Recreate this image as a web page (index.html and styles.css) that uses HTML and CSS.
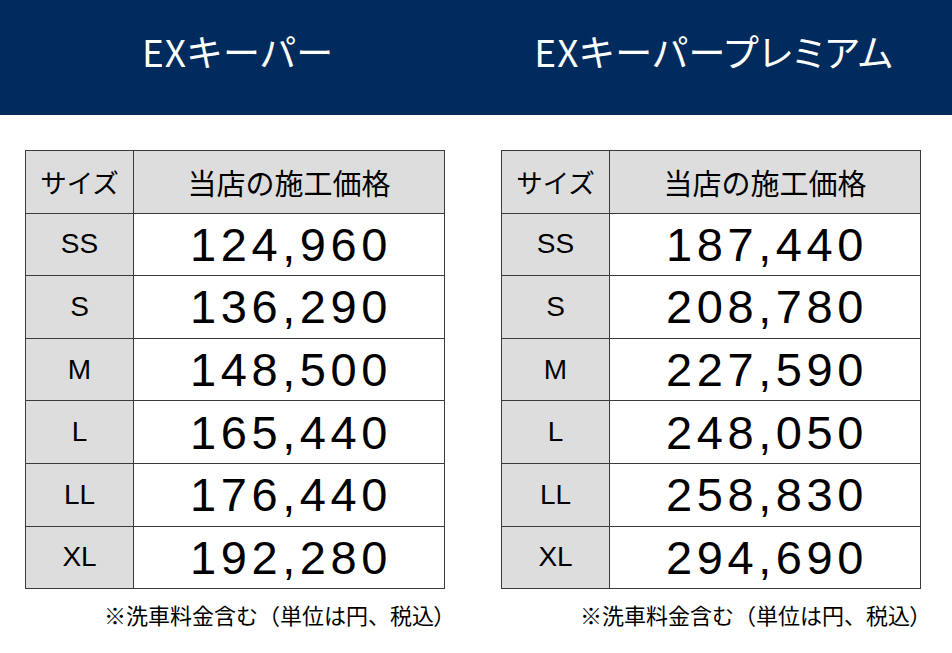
FILE: index.html
```html
<!DOCTYPE html>
<html lang="ja">
<head>
<meta charset="utf-8">
<link rel="stylesheet" href="styles.css">
</head>
<body>
<header class="banner">
  <div class="banner-col"><h1 class="title">EXキーパー</h1></div>
  <div class="banner-col"><h1 class="title">EXキーパープレミアム</h1></div>
</header>
<main class="cols">
  <section class="col">
    <table class="price">
      <thead><tr><th class="size">サイズ</th><th class="head-price">当店の施工価格</th></tr></thead>
      <tbody>
        <tr><td class="size">SS</td><td class="num">124,960</td></tr>
        <tr><td class="size">S</td><td class="num">136,290</td></tr>
        <tr><td class="size">M</td><td class="num">148,500</td></tr>
        <tr><td class="size">L</td><td class="num">165,440</td></tr>
        <tr><td class="size">LL</td><td class="num">176,440</td></tr>
        <tr><td class="size">XL</td><td class="num">192,280</td></tr>
      </tbody>
    </table>
    <p class="note">※洗車料金含む（単位は円、税込<span class="tight">）</span></p>
  </section>
  <section class="col">
    <table class="price">
      <thead><tr><th class="size">サイズ</th><th class="head-price">当店の施工価格</th></tr></thead>
      <tbody>
        <tr><td class="size">SS</td><td class="num">187,440</td></tr>
        <tr><td class="size">S</td><td class="num">208,780</td></tr>
        <tr><td class="size">M</td><td class="num">227,590</td></tr>
        <tr><td class="size">L</td><td class="num">248,050</td></tr>
        <tr><td class="size">LL</td><td class="num">258,830</td></tr>
        <tr><td class="size">XL</td><td class="num">294,690</td></tr>
      </tbody>
    </table>
    <p class="note">※洗車料金含む（単位は円、税込<span class="tight">）</span></p>
  </section>
</main>
</body>
</html>
```
FILE: styles.css
```css
* { box-sizing: border-box; }
html, body { margin: 0; padding: 0; background: #fff; }
body {
  width: 952px;
  height: 653px;
  overflow: hidden;
  font-family: "Noto Sans CJK JP", "Noto Sans", sans-serif;
  color: #000;
}
.banner {
  display: grid;
  grid-template-columns: 476px 476px;
  height: 115px;
  background: #002b5c;
}
.banner-col {
  display: flex;
  align-items: center;
  justify-content: center;
  padding-bottom: 12px;
}
.title {
  margin: 0;
  color: #fff;
  font-size: 37px;
  font-weight: 400;
  line-height: 1;
  font-feature-settings: "palt";
  letter-spacing: 1.2px;
}
.cols {
  display: grid;
  grid-template-columns: 476px 476px;
}
.col {
  padding: 35px 31px 0 25px;
  display: flex;
  flex-direction: column;
}
.price {
  width: 420px;
  border-collapse: collapse;
  table-layout: fixed;
}
.price th, .price td {
  border: 1px solid #3a3a3a;
  height: 62.6px;
  padding: 0;
  text-align: center;
  vertical-align: middle;
}
.price .size {
  width: 108px;
  background: #dddddd;
  font-family: "Liberation Sans", "Noto Sans CJK JP", sans-serif;
  font-size: 28px;
  font-weight: 400;
}
.price th.size {
  font-family: "Noto Sans CJK JP", sans-serif;
  font-size: 26.5px;
}
.head-price {
  background: #dddddd;
  font-size: 29px;
  font-weight: 400;
}
.num {
  font-family: "Liberation Sans", Arial, sans-serif;
  font-size: 47px;
  letter-spacing: 4.6px;
  padding-left: 4px !important;
  background: #fff;
}
.note {
  margin: 9px 0 0;
  text-align: right;
  font-size: 22px;
  line-height: 32px;
}
.tight {
  font-feature-settings: "palt";
}
```
